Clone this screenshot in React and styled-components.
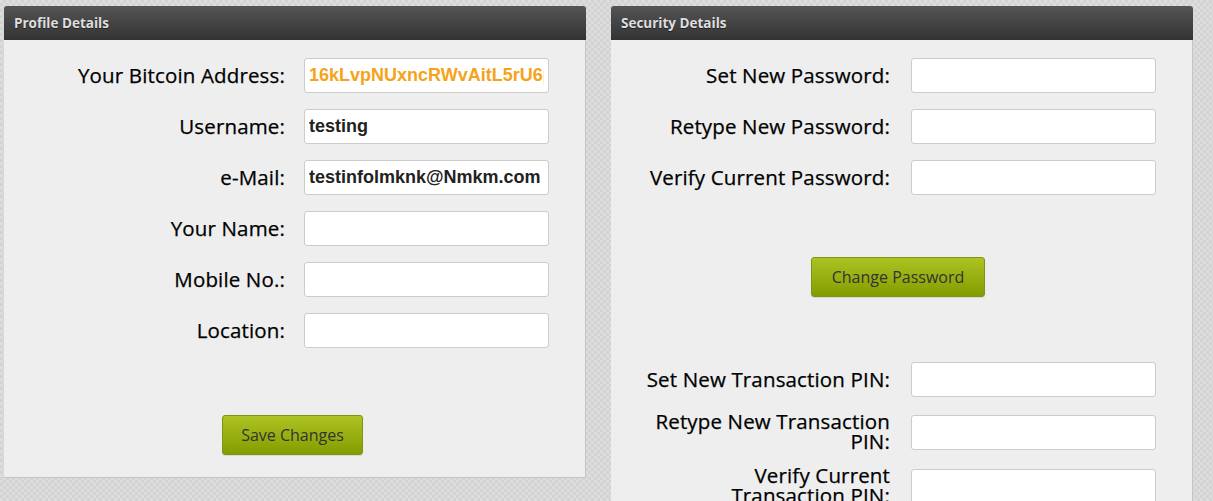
import React from 'react'
import styled, { createGlobalStyle } from 'styled-components'

const GlobalStyle = createGlobalStyle`
  html, body {
    margin: 0;
    padding: 0;
  }
  body {
    background-color: #d9d9d9;
    background-image: repeating-conic-gradient(#d3d3d3 0% 25%, #dddddd 0% 50%);
    background-size: 6px 6px;
    font-family: "Open Sans", "Liberation Sans", sans-serif;
    height: 501px;
    overflow: hidden;
  }
`

const Page = styled.div`
  display: flex;
  align-items: flex-start;
  gap: 25px;
  padding: 6px 0 0 4px;
`

const Panel = styled.section`
  width: 582px;
  flex-shrink: 0;
`

const Header = styled.div`
  height: 34px;
  box-sizing: border-box;
  padding: 0 10px;
  display: flex;
  align-items: center;
  background: linear-gradient(to bottom, #545454, #333333);
  border-radius: 3px 3px 0 0;
  color: #dedede;
  font-size: 13.5px;
  font-weight: 700;
  text-shadow: 0 1px 0 #222;
`

const Body = styled.div`
  background: #eeeeee;
  border-right: 1px solid #c4c4c4;
  border-bottom: 1px solid #c4c4c4;
  padding: 10px 0 ${p => p.$bottom || 0}px;
  min-height: ${p => p.$minHeight || 0}px;
  box-sizing: border-box;
`

const Row = styled.div`
  display: grid;
  grid-template-columns: ${p => p.$labelCol || 281}px 245px;
  column-gap: ${p => p.$gap || 19}px;
  align-items: center;
  padding: 8px 0;
  min-height: 35px;
`

const Label = styled.label`
  justify-self: end;
  text-align: right;
  font-size: 20.5px;
  font-weight: 400;
  letter-spacing: 0.15px;
  line-height: 20px;
  color: #000;
  width: 248px;
  margin-top: -2px;
  -webkit-text-stroke: 0.25px #000;
`

const Field = styled.input`
  box-sizing: border-box;
  width: 245px;
  height: 35px;
  border: 1px solid #cccccc;
  border-radius: 3px;
  background: #fff;
  padding: 0 4px;
  font-family: "Liberation Sans", Arial, sans-serif;
  font-size: 18px;
  font-weight: 700;
  color: ${p => (p.$accent ? '#f5a31a' : '#222')};
  outline: none;
`

const ButtonRow = styled.div`
  display: flex;
  justify-content: center;
  padding: ${p => p.$top}px ${p => p.$shift || 0}px ${p => p.$bottom}px 0;
`

const GreenButton = styled.button`
  height: 40px;
  padding: 0 ${p => p.$pad || 18}px;
  border: 1px solid #7f9410;
  border-radius: 3px;
  background: linear-gradient(to bottom, #adc323, #859c00);
  color: #333;
  font-family: "Open Sans", "Liberation Sans", sans-serif;
  font-size: 16px;
  box-shadow: 0 1px 1px rgba(0, 0, 0, 0.1);
`

const profileFields = [
  { label: 'Your Bitcoin Address:', value: '16kLvpNUxncRWvAitL5rU6pXk', accent: true },
  { label: 'Username:', value: 'testing' },
  { label: 'e-Mail:', value: 'testinfolmknk@Nmkm.com' },
  { label: 'Your Name:', value: '' },
  { label: 'Mobile No.:', value: '' },
  { label: 'Location:', value: '' },
]

const passwordFields = ['Set New Password:', 'Retype New Password:', 'Verify Current Password:']
const pinFields = ['Set New Transaction PIN:', 'Retype New Transaction PIN:', 'Verify Current Transaction PIN:']

const FormRow = ({ label, value, accent, security }) => (
  <Row $labelCol={security ? 279 : 281} $gap={security ? 21 : 19}>
    <Label>{label}</Label>
    <Field type="text" defaultValue={value} $accent={accent} readOnly />
  </Row>
)

export default function App() {
  return (
    <>
      <GlobalStyle />
      <Page>
        <Panel>
          <Header>Profile Details</Header>
          <Body $bottom={22}>
            {profileFields.map(f => (
              <FormRow key={f.label} {...f} />
            ))}
            <ButtonRow $top={59} $bottom={0} $shift={4}>
              <GreenButton>Save Changes</GreenButton>
            </ButtonRow>
          </Body>
        </Panel>
        <Panel>
          <Header>Security Details</Header>
          <Body $minHeight={520}>
            {passwordFields.map(l => (
              <FormRow key={l} label={l} security />
            ))}
            <ButtonRow $top={54} $bottom={57} $shift={7}>
              <GreenButton $pad={20}>Change Password</GreenButton>
            </ButtonRow>
            {pinFields.map(l => (
              <FormRow key={l} label={l} security />
            ))}
          </Body>
        </Panel>
      </Page>
    </>
  )
}
